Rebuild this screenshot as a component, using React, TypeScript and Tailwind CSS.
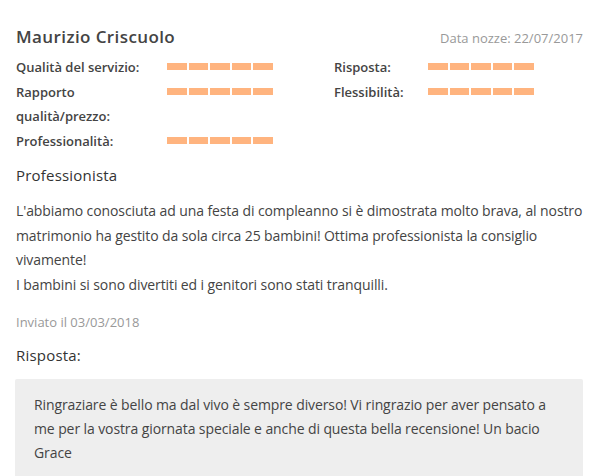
import React from "react";

function Bars() {
  return (
    <div className="flex gap-[2px] pt-[1px]">
      {[0, 1, 2, 3, 4].map((i) => (
        <div key={i} className="w-[19.5px] h-[7px] bg-[#ffb47f]" />
      ))}
    </div>
  );
}

function Row({ label, lines }: { label?: string; lines?: string[] }) {
  return (
    <div className="flex items-start">
      <div className="w-[151px] text-[13px] leading-[24px] font-semibold text-[#444]">
        {lines ? lines.map((l) => <div key={l}>{l}</div>) : label}
      </div>
      <div className="pt-[7px]">
        <Bars />
      </div>
    </div>
  );
}

export default function App() {
  return (
    <div
      className="bg-white w-[615px] h-[476px] overflow-hidden px-[16px] pt-[24px] text-[#333]"
      style={{ fontFamily: '"Open Sans", "Liberation Sans", sans-serif' }}
    >
      <div className="flex justify-between items-baseline w-[567px]">
        <div className="text-[17px] font-semibold text-[#444] leading-[26px] tracking-[0.4px]">Maurizio Criscuolo</div>
        <div className="text-[13px] text-[#999]">Data nozze: 22/07/2017</div>
      </div>
      <div className="flex mt-[5px]">
        <div className="w-[318px] flex flex-col">
          <Row label="Qualità del servizio:" />
          <div className="mt-[1px]">
            <Row lines={["Rapporto", "qualità/prezzo:"]} />
          </div>
          <div className="mt-[1px]">
            <Row label="Professionalità:" />
          </div>
        </div>
        <div className="flex flex-col">
          <div className="flex items-start">
            <div className="w-[94px] text-[13px] leading-[24px] font-semibold text-[#444]">Risposta:</div>
            <div className="pt-[7px]"><Bars /></div>
          </div>
          <div className="flex items-start mt-[1px]">
            <div className="w-[94px] text-[13px] leading-[24px] font-semibold text-[#444]">Flessibilità:</div>
            <div className="pt-[7px]"><Bars /></div>
          </div>
        </div>
      </div>
      <div className="mt-[10px] text-[15px] font-medium text-[#333] leading-[24px] tracking-[0.2px]">Professionista</div>
      <div className="mt-[12px] text-[14px] leading-[24.5px] text-[#444] tracking-[-0.1px] w-[568px]">
        L'abbiamo conosciuta ad una festa di compleanno si è dimostrata molto brava, al nostro matrimonio ha gestito da sola circa 25 bambini! Ottima professionista la consiglio vivamente!
        <br />I bambini si sono divertiti ed i genitori sono stati tranquilli.
      </div>
      <div className="mt-[13px] text-[13px] text-[#999] leading-[24px]">Inviato il 03/03/2018</div>
      <div className="mt-[9px] text-[15px] font-medium text-[#333] leading-[24px] tracking-[0.2px]">Risposta:</div>
      <div className="mt-[12px] w-[568px] -ml-px bg-[#eeeeee] rounded-[2px] px-[19px] pt-[14px] pb-[20px]">
        <div className="text-[14px] leading-[24px] text-[#444] tracking-[-0.1px]">
          Ringraziare è bello ma dal vivo è sempre diverso! Vi ringrazio per aver pensato a me per la vostra giornata speciale e anche di questa bella recensione! Un bacio Grace
        </div>
      </div>
    </div>
  );
}
